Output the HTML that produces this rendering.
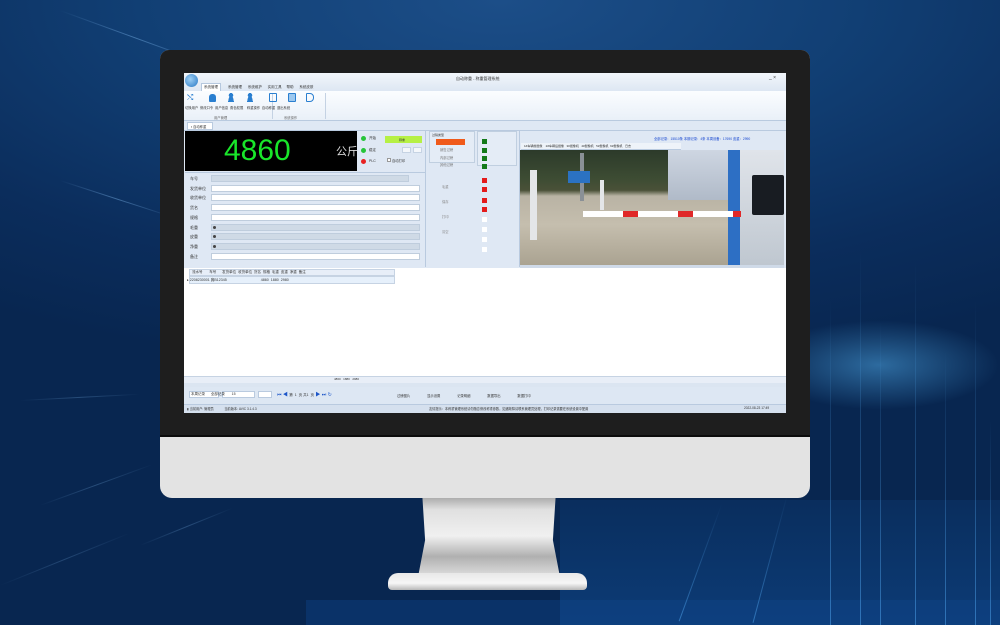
<!DOCTYPE html>
<html><head><meta charset="utf-8"><style>
*{margin:0;padding:0;box-sizing:border-box}
body{width:1000px;height:625px;overflow:hidden;position:relative;font-family:"Liberation Sans","Noto Sans CJK SC",sans-serif;background:radial-gradient(ellipse 90% 60% at 50% 0%,#1c4e88 0%,#113f74 40%,#0b2d5c 75%,#082650 100%)}
.a{position:absolute}
.t{font-size:4px;color:#333;white-space:nowrap}
.line{position:absolute;height:1px;background:linear-gradient(90deg,rgba(120,190,255,0),rgba(140,200,255,.4),rgba(120,190,255,0));transform-origin:left center}
.vl{position:absolute;width:1px;background:linear-gradient(180deg,rgba(80,170,255,0),rgba(90,180,255,.45))}
</style></head><body>
<div class="a" style="left:780px;top:320px;width:220px;height:90px;background:radial-gradient(ellipse at 45% 50%,rgba(90,190,255,.45),rgba(40,120,220,0) 70%)"></div>
<div class="line" style="left:60px;top:10px;width:160px;transform:rotate(20deg)"></div>
<div class="line" style="left:60px;top:180px;width:120px;transform:rotate(18deg)"></div>
<div class="line" style="left:20px;top:400px;width:120px;transform:rotate(-3deg);opacity:.6"></div>
<div class="line" style="left:40px;top:505px;width:120px;transform:rotate(-20deg);opacity:.6"></div>
<div class="line" style="left:140px;top:545px;width:100px;transform:rotate(-22deg);opacity:.6"></div>
<div class="line" style="left:0;top:585px;width:140px;transform:rotate(-22deg);opacity:.5"></div>
<div class="a" style="left:560px;top:500px;width:440px;height:125px;background:linear-gradient(180deg,rgba(20,90,170,.15),rgba(20,100,190,.35))"></div>
<div class="a" style="left:306px;top:600px;width:700px;height:25px;background:rgba(15,70,140,.4)"></div>
<div class="vl" style="left:830px;top:300px;height:325px"></div>
<div class="vl" style="left:860px;top:250px;height:375px"></div>
<div class="vl" style="left:880px;top:320px;height:305px"></div>
<div class="vl" style="left:915px;top:260px;height:365px"></div>
<div class="vl" style="left:945px;top:350px;height:275px"></div>
<div class="vl" style="left:975px;top:300px;height:325px"></div>
<div class="vl" style="left:990px;top:420px;height:205px"></div>
<div class="vl" style="left:700px;top:500px;height:125px;transform:rotate(20deg)"></div>
<div class="vl" style="left:770px;top:490px;height:135px;transform:rotate(15deg)"></div>

<!-- stand -->
<div class="a" style="left:418px;top:495px;width:142px;height:82px;background:linear-gradient(180deg,#a0a0a0 0%,#e0e0e0 18%,#f0f0f0 50%,#b0b0b0 75%,#e0e0e0 100%);clip-path:polygon(3% 0,97% 0,95% 55%,100% 100%,0 100%,5% 55%)"></div>
<div class="a" style="left:388px;top:573px;width:199px;height:17px;background:linear-gradient(180deg,#e8e8e8,#f6f6f6 60%,#b8b8b8);border-radius:10px 10px 4px 4px"></div>
<!-- monitor -->
<div class="a" style="left:160px;top:50px;width:650px;height:448px;background:#e3e3e3;border-radius:9px 9px 12px 12px"></div>
<div class="a" style="left:160px;top:50px;width:650px;height:387px;background:#1e1e1e;border-radius:9px 9px 0 0;border-bottom:2px solid #0c0c0c"></div>

<!-- screen -->
<div class="a" style="left:184px;top:73px;width:602px;height:340px;background:#dfe8f4;overflow:hidden">
 <div class="a" style="left:0;top:0;width:602px;height:18px;background:linear-gradient(#f2f6fb,#dde7f3)"></div>
 <div class="a" style="left:1px;top:1px;width:13px;height:13px;border-radius:50%;background:radial-gradient(circle at 40% 40%,#9fd0f5,#2677c4)"></div>
 <div class="a t" style="left:272px;top:3px;font-size:4px">自动称重 - 称重管理系统</div>
 <div class="a t" style="left:585px;top:2px;font-size:5px">_ ×</div>
 <div class="a" style="left:17px;top:10px;width:20px;height:8px;background:#fff;border:1px solid #b6c8de;border-bottom:none"></div>
 <div class="a t" style="left:20px;top:12px;font-size:3.5px">系统管理</div>
 <div class="a t" style="left:44px;top:12px;font-size:3.5px">系统管理 &nbsp;&nbsp;&nbsp;&nbsp;&nbsp;系统维护 &nbsp;&nbsp;&nbsp;&nbsp;&nbsp;实用工具 &nbsp;&nbsp;&nbsp;&nbsp;帮助 &nbsp;&nbsp;&nbsp;&nbsp;&nbsp;系统皮肤</div>
 <div class="a" style="left:0;top:18px;width:602px;height:30px;background:linear-gradient(#fbfdff,#e9f0f8);border-bottom:1px solid #b9cadf"></div>
 <div class="a" style="left:88px;top:20px;width:1px;height:26px;background:#c4d2e3"></div>
 <div class="a" style="left:141px;top:20px;width:1px;height:26px;background:#c4d2e3"></div>
 <div class="a" style="left:3px;top:21px;width:8px;height:8px;color:#2a7fd0;font-size:8px;line-height:8px">⤭</div>
 <div class="a" style="left:25px;top:21px;width:7px;height:8px;background:#2a7fd0;border-radius:3px 3px 1px 1px"></div>
 <div class="a" style="left:43px;top:20px;width:8px;height:9px;background:radial-gradient(circle at 50% 25%,#2a7fd0 28%,transparent 30%),radial-gradient(ellipse at 50% 110%,#2a7fd0 50%,transparent 52%)"></div>
 <div class="a" style="left:62px;top:20px;width:8px;height:9px;background:radial-gradient(circle at 50% 25%,#2a7fd0 28%,transparent 30%),radial-gradient(ellipse at 50% 110%,#2a7fd0 50%,transparent 52%)"></div>
 <div class="a" style="left:85px;top:20px;width:8px;height:9px;border:1.5px solid #2a7fd0;border-radius:1px"></div>
 <div class="a" style="left:104px;top:20px;width:8px;height:9px;border:1.5px solid #2a7fd0;border-radius:1px;background:#9cc8ef"></div>
 <div class="a" style="left:122px;top:20px;width:8px;height:9px;border:1.5px solid #2a7fd0;border-radius:1px 4px 4px 1px"></div>
 <div class="a t" style="left:1px;top:32px;font-size:3.3px">切换用户 &nbsp;修改口令 &nbsp;用户信息 &nbsp;角色权限 &nbsp;&nbsp;&nbsp;称重操作 &nbsp;自动称重 &nbsp;退出系统</div>
 <div class="a t" style="left:30px;top:42px;font-size:3.3px;color:#666">用户管理</div>
 <div class="a t" style="left:100px;top:42px;font-size:3.3px;color:#666">系统操作</div>
 <div class="a" style="left:3px;top:49px;width:26px;height:8px;background:#fff;border:1px solid #b9cadf"></div>
 <div class="a t" style="left:7px;top:51px;font-size:3.3px">▪ 自动称重</div>
 <div class="a" style="left:0;top:57px;width:602px;height:1px;background:#b9cadf"></div>
 <div class="a" style="left:1px;top:58px;width:172px;height:40px;background:#000"></div>
 <div class="a" style="left:40px;top:58px;font-size:30px;line-height:40px;color:#19e62a;font-family:'Liberation Sans',sans-serif">4860</div>
 <div class="a" style="left:152px;top:70px;font-size:11px;color:#ddd">公斤</div>
 <div class="a" style="left:177px;top:63px;width:5px;height:5px;border-radius:50%;background:#27c43a"></div>
 <div class="a" style="left:177px;top:75px;width:5px;height:5px;border-radius:50%;background:#27c43a"></div>
 <div class="a" style="left:177px;top:86px;width:5px;height:5px;border-radius:50%;background:#e82222"></div>
 <div class="a t" style="left:185px;top:63px;font-size:3.5px">开始</div>
 <div class="a t" style="left:185px;top:75px;font-size:3.5px">稳定</div>
 <div class="a t" style="left:185px;top:86px;font-size:3.5px">PLC</div>
 <div class="a" style="left:201px;top:63px;width:37px;height:7px;background:#b6f045"></div>
 <div class="a t" style="left:215px;top:65px;font-size:3px">称重</div>
 <div class="a" style="left:218px;top:74px;width:9px;height:6px;background:#f4f7fb;border:1px solid #c6d3e3"></div>
 <div class="a" style="left:229px;top:74px;width:9px;height:6px;background:#f4f7fb;border:1px solid #c6d3e3"></div>
 <div class="a" style="left:203px;top:85px;width:4px;height:4px;border:1px solid #999;background:#fff"></div>
 <div class="a t" style="left:208px;top:85px;font-size:3.3px">自动打印</div>
 <div class="a" style="left:1px;top:99px;width:240px;height:95px;background:#dfe8f4;border-top:1px solid #b9cadf"></div>
 <div class="a" style="left:241px;top:58px;width:1px;height:136px;background:#b9cadf"></div>
 <div class="a" style="left:245px;top:58px;width:46px;height:32px;border:1px solid #c0cfe0;background:#e4ecf6"></div>
 <div class="a" style="left:252px;top:66px;width:29px;height:6px;background:#f05a1a"></div>
 <div class="a t" style="left:248px;top:60px;font-size:3px">过磅类型</div>
 <div class="a t" style="left:256px;top:74px;font-size:3.3px;line-height:7.5px;color:#777">销售过磅<br>内部过磅<br>其他过磅</div>
 <div class="a t" style="left:258px;top:107px;font-size:3.3px;line-height:15px;color:#888">毛重<br>保存<br>打印<br>清空</div>
 <div class="a" style="left:293px;top:58px;width:40px;height:35px;border:1px solid #c0cfe0;background:#e4ecf6"></div>
 <div class="a" style="left:298px;top:66px;width:5px;height:5px;background:#137a19"></div>
 <div class="a" style="left:298px;top:75px;width:5px;height:5px;background:#137a19"></div>
 <div class="a" style="left:298px;top:83px;width:5px;height:5px;background:#137a19"></div>
 <div class="a" style="left:298px;top:91px;width:5px;height:5px;background:#137a19"></div>
 <div class="a" style="left:298px;top:105px;width:5px;height:5px;background:#e41b1b"></div>
 <div class="a" style="left:298px;top:114px;width:5px;height:5px;background:#e41b1b"></div>
 <div class="a" style="left:298px;top:125px;width:5px;height:5px;background:#e41b1b"></div>
 <div class="a" style="left:298px;top:134px;width:5px;height:5px;background:#e41b1b"></div>
 <div class="a" style="left:298px;top:144px;width:5px;height:5px;background:#fff"></div>
 <div class="a" style="left:298px;top:154px;width:5px;height:5px;background:#fff"></div>
 <div class="a" style="left:298px;top:164px;width:5px;height:5px;background:#fff"></div>
 <div class="a" style="left:298px;top:174px;width:5px;height:5px;background:#fff"></div>
 <div class="a" style="left:335px;top:58px;width:1px;height:136px;background:#b9cadf"></div>
 <div class="a t" style="left:470px;top:63px;font-size:3.3px;color:#1747d0">全部记录：15510条 本期记录：4条 本周设备：17690 皮重：2990</div>
 <div class="a" style="left:337px;top:70px;width:160px;height:7px;background:#eef3f9;border-bottom:1px solid #b9cadf"></div>
 <div class="a t" style="left:340px;top:71px;font-size:3px">1#车辆前摄像 &nbsp;&nbsp;&nbsp;2#车辆后摄像 &nbsp;&nbsp;3#摄像机 &nbsp;&nbsp;4#摄像机 &nbsp;&nbsp;5#摄像机 &nbsp;6#摄像机 &nbsp;&nbsp;日志</div>
 <div class="a" style="left:336px;top:77px;width:264px;height:115px;background:linear-gradient(180deg,#2c3a2a 0%,#3d4c33 25%,#4a5138 35%,#b9b3a4 40%,#c5beae 65%,#aaa391 100%);overflow:hidden">
  <div class="a" style="left:148px;top:0;width:60px;height:50px;background:linear-gradient(#ced6e2,#b0bac8)"></div>
  <div class="a" style="left:208px;top:0;width:12px;height:115px;background:#2d6fc4"></div>
  <div class="a" style="left:220px;top:0;width:44px;height:115px;background:linear-gradient(#e0e4ea,#bfc7d0)"></div>
  <div class="a" style="left:232px;top:25px;width:32px;height:40px;background:#181c22;border-radius:2px"></div>
  <div class="a" style="left:10px;top:20px;width:7px;height:70px;background:#e4e6e8"></div>
  <div class="a" style="left:80px;top:30px;width:4px;height:30px;background:#e4e6e8"></div>
  <div class="a" style="left:60px;top:3px;width:4px;height:48px;background:#8a9096"></div>
  <div class="a" style="left:48px;top:21px;width:22px;height:12px;background:#2b72c2"></div>
  <div class="a" style="left:63px;top:61px;width:158px;height:6px;background:repeating-linear-gradient(90deg,#fff 0 40px,#e02828 40px 55px)"></div>
 </div>
 <div class="a" style="left:336px;top:192px;width:264px;height:3px;background:#cfdae8"></div>
 <div class="a" style="left:0;top:195px;width:602px;height:113px;background:#fff"></div>
 <div class="a" style="left:5px;top:196px;width:206px;height:7px;background:#e7eef8;border:1px solid #c6d3e3"></div>
 <div class="a t" style="left:8px;top:197px;font-size:3.5px">流水号 &nbsp;&nbsp;&nbsp;&nbsp;&nbsp;&nbsp;车号 &nbsp;&nbsp;&nbsp;&nbsp;&nbsp;发货单位 &nbsp;收货单位 &nbsp;货名 &nbsp;规格 &nbsp;毛重 &nbsp;皮重 &nbsp;净重 &nbsp;备注</div>
 <div class="a" style="left:5px;top:203px;width:206px;height:8px;background:#e6f0fb;border:1px solid #c6d3e3"></div>
 <div class="a t" style="left:3px;top:205px;font-size:3.6px">▸ 2208230001 冀B12345 &nbsp;&nbsp;&nbsp;&nbsp;&nbsp;&nbsp;&nbsp;&nbsp;&nbsp;&nbsp;&nbsp;&nbsp;&nbsp;&nbsp;&nbsp;&nbsp;&nbsp;&nbsp;&nbsp;&nbsp;&nbsp;&nbsp;&nbsp;&nbsp;&nbsp;&nbsp;&nbsp;&nbsp;&nbsp;&nbsp;&nbsp;&nbsp;&nbsp;4860 &nbsp;1880 &nbsp;2980</div>
 <div class="a" style="left:0;top:303px;width:602px;height:7px;background:#e8eef7;border-top:1px solid #c6d3e3"></div>
 <div class="a t" style="left:150px;top:304px;font-size:3px">4860 &nbsp;&nbsp;1880 &nbsp;&nbsp;2980</div>
 <div class="a" style="left:0;top:310px;width:602px;height:4px;background:#dbe5f1"></div>
 <div class="a" style="left:0;top:314px;width:602px;height:17px;background:#dde7f3"></div>
 <div class="a" style="left:5px;top:318px;width:30px;height:7px;background:#fff;border:1px solid #b9cadf"></div>
 <div class="a" style="left:38px;top:318px;width:33px;height:7px;background:#fff;border:1px solid #b9cadf"></div>
 <div class="a" style="left:74px;top:318px;width:14px;height:7px;background:#fff;border:1px solid #b9cadf"></div>
 <div class="a t" style="left:7px;top:319px;font-size:3.5px">本周记录 &nbsp;&nbsp;&nbsp;&nbsp;&nbsp;全部记录 &nbsp;&nbsp;&nbsp;&nbsp;&nbsp;&nbsp;15</div>
 <div class="a t" style="left:93px;top:318px;font-size:5px;color:#1d56c8">⏮ ◀ <span style="font-size:3.5px;color:#333">第 &nbsp;1 &nbsp;页 共1 &nbsp;页</span> ▶ ⏭ ↻</div>
 <div class="a t" style="left:213px;top:320px;font-size:3.3px;word-spacing:16px">过磅图片 显示设置 记录明细 数据导出 数据打印</div>
 <div class="a" style="left:0;top:331px;width:602px;height:9px;background:#d5e0ee;border-top:1px solid #b9cadf"></div>
 <div class="a t" style="left:3px;top:333px;font-size:3.2px">▮ 当前用户: 管理员 &nbsp;&nbsp;&nbsp;&nbsp;&nbsp;&nbsp;&nbsp;&nbsp;&nbsp;&nbsp;&nbsp;当前版本: AVIC 3.1.4.3</div>
 <div class="a t" style="left:245px;top:333px;font-size:3.2px">友情提示：本称重管理系统请勿随意修改称重参数，如遇故障请联系管理员处理，打印记录需要在系统设置中配置</div>
 <div class="a t" style="left:560px;top:333px;font-size:3.2px">2022-08-23 17:49</div>
</div>
<script>
var labels=["车号","发货单位","收货单位","货名","规格","毛重","皮重","净重","备注"];
var h="";
for(var i=0;i<9;i++){var y=175+i*9.7;var grey=(i==0||i>=5&&i<=7);
h+='<div class="a t" style="left:190px;top:'+(y+1)+'px;font-size:4px">'+labels[i]+'</div>';
h+='<div class="a" style="left:211px;top:'+y+'px;width:'+(i==0?198:209)+'px;height:7px;background:'+(grey?'#cfdae6':'#fff')+';border:1px solid #bfcddd"></div>';
if(i>=5&&i<=7)h+='<div class="a" style="left:213px;top:'+(y+2)+'px;width:3px;height:3px;border-radius:50%;background:#444"></div>';}
document.body.insertAdjacentHTML('beforeend',h);
</script>
</body></html>
